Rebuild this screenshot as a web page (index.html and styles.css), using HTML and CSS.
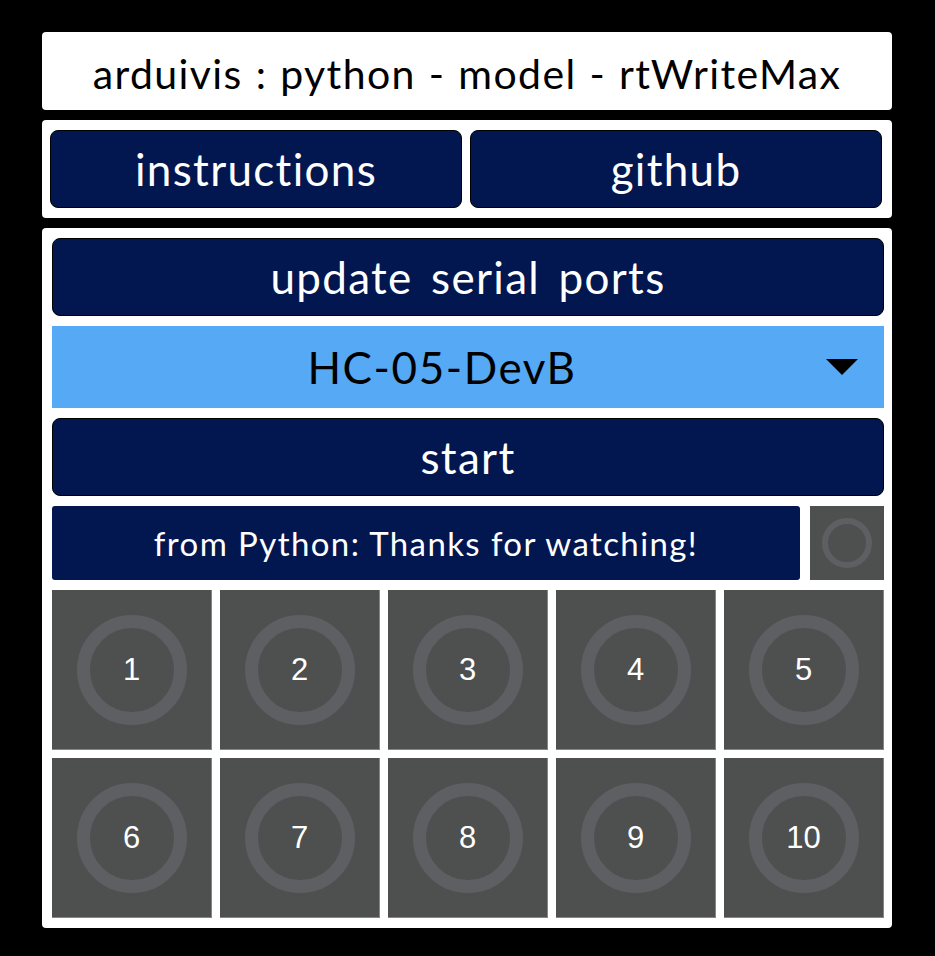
FILE: index.html
```html
<!DOCTYPE html>
<html>
<head>
<meta charset="utf-8">
<link rel="stylesheet" href="styles.css">
</head>
<body>
<div class="app">
  <div class="panel title">arduivis : python - model - rtWriteMax</div>
  <div class="panel links">
    <div class="btn">instructions</div>
    <div class="btn">github</div>
  </div>
  <div class="panel main">
    <div class="btn wide">update serial ports</div>
    <div class="select">
      <span>HC-05-DevB</span>
      <svg class="caret" width="32" height="16" viewBox="0 0 32 16"><polygon points="0,0 32,0 16,16" fill="#000"/></svg>
    </div>
    <div class="btn wide">start</div>
    <div class="msgrow">
      <div class="msg">from Python: Thanks for watching!</div>
      <div class="ind"><div class="ring small"></div></div>
    </div>
    <div class="grid">
      <div class="cell"><div class="ring">1</div></div>
      <div class="cell"><div class="ring">2</div></div>
      <div class="cell"><div class="ring">3</div></div>
      <div class="cell"><div class="ring">4</div></div>
      <div class="cell"><div class="ring">5</div></div>
      <div class="cell"><div class="ring">6</div></div>
      <div class="cell"><div class="ring">7</div></div>
      <div class="cell"><div class="ring">8</div></div>
      <div class="cell"><div class="ring">9</div></div>
      <div class="cell"><div class="ring">10</div></div>
    </div>
  </div>
</div>
</body>
</html>
```

FILE: styles.css
```css
html, body {
  margin: 0;
  padding: 0;
  background: #000;
}
body {
  font-family: "Lato", "Open Sans", sans-serif;
}
.app {
  width: 850px;
  margin: 32px 0 0 42px;
  display: flex;
  flex-direction: column;
  gap: 10px;
}
.panel {
  background: #fff;
  border-radius: 4px;
}
.title {
  height: 78px;
  display: flex;
  align-items: center;
  justify-content: center;
  font-size: 41px;
  letter-spacing: 1.4px;
  word-spacing: 1px;
  color: #000;
  padding-top: 4px;
  box-sizing: border-box;
}
.links {
  padding: 10px 10px 10px 8px;
  display: flex;
  gap: 8px;
}
.btn {
  flex: 1;
  height: 78px;
  box-sizing: border-box;
  background: #02164f;
  border: 1px solid #000;
  border-radius: 8px;
  color: #fff;
  font-size: 44px;
  letter-spacing: 1.3px;
  word-spacing: 6px;
  display: flex;
  align-items: center;
  justify-content: center;
}
.main {
  padding: 10px 8px 10px 10px;
  display: flex;
  flex-direction: column;
  gap: 10px;
}
.btn.wide {
  flex: none;
}
.select {
  height: 82px;
  background: #56a9f5;
  position: relative;
  display: flex;
  align-items: center;
  justify-content: center;
  font-size: 44px;
  letter-spacing: 1.6px;
  color: #000;
}
.select span {
  margin-left: -52px;
}
.caret {
  position: absolute;
  right: 26px;
  top: 33px;
}
.msgrow {
  display: flex;
  gap: 10px;
  height: 74px;
}
.msg {
  flex: 1;
  background: #02164f;
  border-radius: 3px;
  color: #fff;
  font-size: 33px;
  letter-spacing: 1.4px;
  display: flex;
  align-items: center;
  justify-content: center;
}
.ind {
  width: 74px;
  background: #4d504f;
  display: flex;
  align-items: center;
  justify-content: center;
}
.grid {
  display: grid;
  grid-template-columns: repeat(5, 160px);
  grid-auto-rows: 160px;
  gap: 8px;
}
.cell {
  background: #4d504f;
  box-sizing: border-box;
  border-right: 1px solid #858585;
  border-bottom: 1px solid #858585;
  display: flex;
  align-items: center;
  justify-content: center;
}
.ring {
  width: 84px;
  height: 84px;
  border: 13px solid #5d5f63;
  border-radius: 50%;
  display: flex;
  align-items: center;
  justify-content: center;
  color: #fff;
  font-family: "Liberation Sans", Arial, sans-serif;
  font-size: 31px;
}
.ring.small {
  width: 38px;
  height: 38px;
  border-width: 6px;
}
```
